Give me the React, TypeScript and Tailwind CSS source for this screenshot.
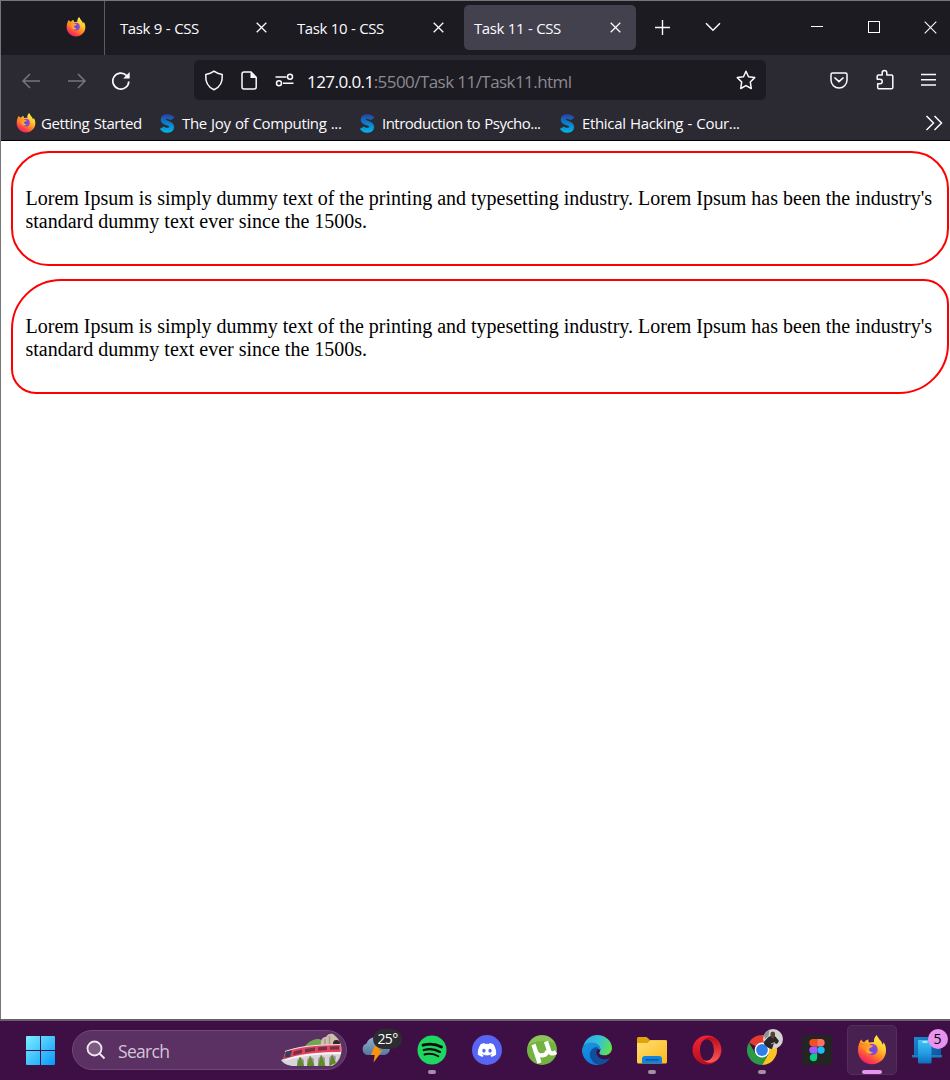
import React from "react";
import { FaDiscord } from "react-icons/fa";

const UI = "font-['Open_Sans','Noto_Sans',sans-serif]";

function FirefoxLogo({ size, id }: { size: number; id: string }) {
  return (
    <svg width={size} height={size} viewBox="0 0 30 30" className="shrink-0">
      <defs>
        <linearGradient id={id + "a"} x1="0.85" y1="0.05" x2="0.3" y2="1">
          <stop offset="0" stopColor="#fff44f" />
          <stop offset="0.35" stopColor="#ffc52e" />
          <stop offset="0.6" stopColor="#ff8425" />
          <stop offset="0.82" stopColor="#ff3f48" />
          <stop offset="1" stopColor="#e91e78" />
        </linearGradient>
        <radialGradient id={id + "b"} cx="0.55" cy="0.6" r="0.6">
          <stop offset="0" stopColor="#5f4df0" />
          <stop offset="1" stopColor="#a545c0" />
        </radialGradient>
        <linearGradient id={id + "c"} x1="0" y1="0" x2="1" y2="0.3">
          <stop offset="0" stopColor="#ff7a1f" />
          <stop offset="1" stopColor="#ffb42a" />
        </linearGradient>
      </defs>
      <path
        d="M2.500 8 C3 6 3.800 5 4.500 4.500 C5 6.500 6 7 7.500 7 C8.500 5.500 10 4.500 11.500 4.500 C11.200 5.500 11.300 6.500 12 7.500 L17 7 C16.500 4 18 1.500 20 0 C20.500 3.500 24.500 5 25.500 9.500 C26.500 9 26.500 7.500 26.500 7 C28.500 10 29 12.500 29 15.500 C29 23.500 22.500 29.300 15 29.300 C7 29.300 1 23 1 15.500 C1 12 1.500 10 2.500 8Z"
        fill={`url(#${id}a)`}
      />
      <circle cx="15" cy="14.500" r="5.700" fill={`url(#${id}b)`} />
      <path
        d="M2.500 8 C5 8.500 7 7.500 9 8 C11 8.300 11 9.500 13 10 L16 10.800 C15.300 12.800 12.500 12.500 12 14 C11.800 16.500 14.500 17.500 16.500 17 C13 20.500 8.500 18.500 8 14.500 C5 14 3 11 2.500 8Z"
        fill={`url(#${id}c)`}
      />
    </svg>
  );
}

function Cross({ size, w = 1.3 }: { size: number; w?: number }) {
  return (
    <svg width={size} height={size} viewBox={`0 0 ${size} ${size}`} className="shrink-0">
      <path d={`M.7 .7 L${size - 0.7} ${size - 0.7} M${size - 0.7} .7 L.7 ${size - 0.7}`} stroke="#fbfbfe" strokeWidth={w} />
    </svg>
  );
}

function Tab({ title, active }: { title: string; active?: boolean }) {
  return (
    <div
      className={
        "flex h-[45px] w-[172px] shrink-0 items-center justify-between rounded-[5px] pl-[10px] pr-[15px] " +
        (active ? "bg-[#42414d]" : "")
      }
    >
      <span className="whitespace-nowrap text-[15px] leading-[20px] tracking-[-0.450px] text-[#fbfbfe] [word-spacing:0.500px]">
        {title}
      </span>
      <Cross size={11} />
    </div>
  );
}

function SwayamMark({ id }: { id: string }) {
  return (
    <svg width="15" height="19" viewBox="0 0 15 19" className="shrink-0">
      <defs>
        <linearGradient id={id} x1="0" y1="0" x2="0" y2="19" gradientUnits="userSpaceOnUse">
          <stop offset="0" stopColor="#2b3f9e" />
          <stop offset="0.45" stopColor="#0b7cc9" />
          <stop offset="1" stopColor="#05b4ea" />
        </linearGradient>
      </defs>
      <path
        d="M12.300 5 C10.500 2 3.200 1.500 3.200 5.700 C3.200 9.600 11.700 8.500 11.700 12.700 C11.700 17.300 4 17.200 2 13.600"
        fill="none"
        stroke={`url(#${id})`}
        strokeWidth="4.900"
      />
    </svg>
  );
}

function TabStrip() {
  return (
    <div className="flex h-[54px] bg-[#1c1b22]">
      <div className="flex w-[104px] shrink-0 items-start justify-end border-r border-[#5b5b60] pr-[18px] pt-[16px]">
        <FirefoxLogo size={20} id="view" />
      </div>
      <div className="flex gap-[5px] pl-[5px] pt-[4px]">
        <Tab title="Task 9 - CSS" />
        <Tab title="Task 10 - CSS" />
        <Tab title="Task 11 - CSS" active />
      </div>
      <svg width="15" height="15" viewBox="0 0 15 15" className="ml-[19px] mt-[19px] shrink-0">
        <path d="M7.500 0V15M0 7.500H15" stroke="#fbfbfe" strokeWidth="1.400" />
      </svg>
      <svg width="16" height="10" viewBox="0 0 16 10" className="ml-[35px] mt-[21px] shrink-0">
        <path d="M1 1.300 L8 8.200 L15 1.300" fill="none" stroke="#fbfbfe" strokeWidth="1.500" />
      </svg>
      <div className="ml-[90px] mt-[25px] h-px w-[12px] shrink-0 bg-white" />
      <div className="ml-[45px] mt-[20px] h-[12px] w-[12px] shrink-0 border border-white" />
      <div className="ml-[44px] mt-[20px] shrink-0">
        <Cross size={13} w={1.1} />
      </div>
    </div>
  );
}

function Arrow({ flip }: { flip?: boolean }) {
  return (
    <svg width="19" height="16" viewBox="0 0 19 16" className={"mt-px shrink-0 " + (flip ? "-scale-x-100" : "")}>
      <path d="M18 8H1.200M8 1L1 8L8 15" fill="none" stroke="#77767d" strokeWidth="1.500" />
    </svg>
  );
}

function AddressBar() {
  return (
    <div className="ml-[63px] flex h-[40px] w-[572px] shrink-0 items-center rounded-[5px] bg-[#1c1b22] pl-[10px] pr-[10px]">
      <svg width="20" height="21" viewBox="0 0 20 21" className="shrink-0">
        <path
          d="M10 1.200 C12.500 3.200 15.200 4 18.200 4.400 C18.700 10.500 17 16.800 10 19.700 C3 16.800 1.300 10.500 1.800 4.400 C4.800 4 7.500 3.200 10 1.200Z"
          fill="none"
          stroke="#fbfbfe"
          strokeWidth="1.500"
          strokeLinejoin="round"
        />
      </svg>
      <svg width="17" height="19" viewBox="0 0 17 19" className="ml-[17px] shrink-0">
        <path d="M3 1 H10 L15.200 6.200 V16 A2 2 0 0 1 13.200 18 H3 A2 2 0 0 1 1 16 V3 A2 2 0 0 1 3 1Z" fill="none" stroke="#fbfbfe" strokeWidth="1.500" />
        <path d="M9.500 1 V7 H15.500Z" fill="#fbfbfe" />
      </svg>
      <svg width="19" height="14" viewBox="0 0 19 14" className="ml-[17px] shrink-0">
        <g fill="none" stroke="#fbfbfe" strokeWidth="1.500">
          <path d="M.5 4H11.500M8 10.300H18.500" />
          <circle cx="15" cy="3.700" r="2.500" />
          <circle cx="4" cy="10.300" r="2.500" />
        </g>
      </svg>
      <span className="ml-[13px] grow whitespace-nowrap pt-[3px] text-[17px] leading-[24px] tracking-[-0.560px] text-[#8b8a90]">
        <span className="text-[#fbfbfe]">127.0.0.1</span>:5500/Task 11/Task11.html
      </span>
      <svg width="20" height="20" viewBox="0 0 20 20" className="shrink-0">
        <path
          d="M10 1.300 L12.500 6.700 L18.700 7.600 L14.300 12 L15.300 18.500 L10 15.600 L4.700 18.500 L5.700 12 L1.300 7.600 L7.500 6.700Z"
          fill="none"
          stroke="#fbfbfe"
          strokeWidth="1.500"
          strokeLinejoin="round"
        />
      </svg>
    </div>
  );
}

function NavBar() {
  return (
    <div className="flex h-[50px] items-center bg-[#2b2a33] pl-[21px]">
      <Arrow />
      <div className="ml-[26px] flex">
        <Arrow flip />
      </div>
      <svg width="20" height="20" viewBox="0 0 20 20" className="ml-[25px] mt-[2px] shrink-0">
        <path d="M17.800 10.500 A8 8 0 1 1 15.600 4.600" fill="none" stroke="#fbfbfe" strokeWidth="1.700" />
        <path d="M18.700 1 V7.500 H12.200Z" fill="#fbfbfe" />
      </svg>
      <AddressBar />
      <svg width="18" height="17" viewBox="0 0 18 17" className="ml-[64px] shrink-0">
        <path d="M2.500 1 H15.500 A1.500 1.500 0 0 1 17 2.500 V8 A8 8 0 0 1 1 8 V2.500 A1.500 1.500 0 0 1 2.500 1Z" fill="none" stroke="#fbfbfe" strokeWidth="1.500" />
        <path d="M5 6 L9 9.700 L13 6" fill="none" stroke="#fbfbfe" strokeWidth="1.700" strokeLinecap="round" />
      </svg>
      <svg width="18" height="21" viewBox="0 0 18 21" className="-mt-px ml-[28px] shrink-0">
        <path
          d="M6.200 6 V3.800 A2.300 2.300 0 0 1 10.800 3.800 V6 H15.500 A1.300 1.300 0 0 1 16.800 7.300 V18.500 A1.300 1.300 0 0 1 15.500 19.800 H3 A1.300 1.300 0 0 1 1.700 18.500 V14.800 H4 A2.200 2.200 0 0 0 4 10.300 H1.200 V7.300 A1.300 1.300 0 0 1 2.500 6Z"
          fill="none"
          stroke="#fbfbfe"
          strokeWidth="1.500"
          strokeLinejoin="round"
        />
      </svg>
      <svg width="15" height="14" viewBox="0 0 15 14" className="ml-[27px] shrink-0">
        <path d="M0 1.500H15M0 6.700H15M0 12H15" stroke="#fbfbfe" strokeWidth="1.400" />
      </svg>
    </div>
  );
}

function Bookmarks() {
  const t = "whitespace-nowrap -mt-px text-[15px] leading-[20px] text-[#fbfbfe] [word-spacing:0.800px] ";
  return (
    <div className="flex h-[36px] items-center border-b border-black bg-[#2b2a33] pl-[15px] pt-px">
      <div className="flex w-[144px] shrink-0 items-center gap-[5px]">
        <FirefoxLogo size={20} id="start" />
        <span className={t + "tracking-[-0.400px]"}>Getting Started</span>
      </div>
      <div className="flex w-[200px] shrink-0 items-center gap-[7px]">
        <SwayamMark id="s1" />
        <span className={t + "tracking-[-0.370px]"}>The Joy of Computing ...</span>
      </div>
      <div className="flex w-[200px] shrink-0 items-center gap-[7px]">
        <SwayamMark id="s2" />
        <span className={t + "tracking-[-0.520px]"}>Introduction to Psycho...</span>
      </div>
      <div className="flex w-[365px] shrink-0 items-center gap-[7px]">
        <SwayamMark id="s3" />
        <span className={t + "tracking-[-0.340px]"}>Ethical Hacking - Cour...</span>
      </div>
      <svg width="18" height="16" viewBox="0 0 18 16" className="shrink-0">
        <path d="M1.500 1L8.500 8L1.500 15M9.500 1L16.500 8L9.500 15" fill="none" stroke="#fbfbfe" strokeWidth="1.500" />
      </svg>
    </div>
  );
}

function Card({ shape }: { shape: string }) {
  return (
    <div className={"h-[115px] w-[938px] border-2 border-[#f00] px-[12.500px] pt-[34px] " + shape}>
      <p className="font-['Liberation_Serif',serif] text-[20px] leading-[23px] text-black">
        Lorem Ipsum is simply dummy text of the printing and typesetting industry. Lorem Ipsum has been the industry's
        standard dummy text ever since the 1500s.
      </p>
    </div>
  );
}

function TrainArt() {
  return (
    <svg width="63" height="34" viewBox="0 0 63 34" className="shrink-0">
      <path d="M24 14 C29 8 34 6 38 6 C41 6 44 8 46 14Z" fill="#6fa653" />
      <path d="M41 14 C40 6 43 4 46 4 C47 1 51 0 53 1 C58 5 61 9 61.500 15 C62 24 58 30 52 33 L41 28Z" fill="#cdbfae" />
      <path d="M45 6 V13 M49.500 3 V12" stroke="#a59686" strokeWidth="1.400" />
      <path d="M53 12 V10 A3.500 3.500 0 0 1 60 11 V14Z" fill="#33272a" />
      <path d="M1 27 L12 22 L61 18 C60 26 55 31 50 33 L12 33 C6 32 3 30 1 27Z" fill="#d9d4da" />
      <path d="M17 33 V28 A4 4 0 0 1 24 27 V33Z M27 33 V27 A4 4 0 0 1 34 26 V33Z M38 33 V26 A4 4 0 0 1 45 25 V33Z M49 32 V25 A4 4 0 0 1 56 24 L55 30Z" fill="#a795a3" />
      <path d="M20 22 L24 33 H17Z M30 22 L34.500 33 H27Z M41 21 L45.500 33 H38Z M52 21 L56 30 L49 33Z" fill="#5e8d26" />
      <path d="M3.500 25 C4 19 7 17 12 16 C30 12.500 46 11.500 60.500 11.500 V19 C46 19 28 20.500 14 24.500 C10 26.500 5 26.500 3.500 25Z" fill="#e8415c" />
      <path d="M5 18.500 C18 13.500 40 11.500 60.500 11.500" stroke="#f1dfe5" strokeWidth="1.200" fill="none" />
      <path d="M6 18.500 L12 17.500 L10 24 L4.500 24.500Z" fill="#31425f" />
      <path d="M14 18.500 L22 16.500 V20 L13 22.300Z M25 16 L35 14.500 V18 L25 19.500Z M38 14.300 L47 13.600 V17 L38 17.800Z M50 13.500 L59 13.200 V16.500 L50 16.800Z" fill="#713149" />
      <path d="M5 27 C20 21.500 40 20 61 20" stroke="#f7f4f7" strokeWidth="1.800" fill="none" />
    </svg>
  );
}

function Weather() {
  return (
    <div className="relative ml-[14px] h-[59px] w-[43.500px] shrink-0">
      <svg width="32" height="30" viewBox="0 0 32 30" className="absolute left-0 top-[12px]">
        <defs>
          <linearGradient id="cl" x1="0" y1="0" x2="0" y2="1">
            <stop offset="0" stopColor="#93b0ca" />
            <stop offset="1" stopColor="#52789e" />
          </linearGradient>
        </defs>
        <path d="M6.500 22 A6 6 0 0 1 5.500 10.500 A9.500 9.500 0 0 1 22 8 A7.200 7.200 0 0 1 24 22Z" fill="url(#cl)" />
        <path d="M13.500 13 H20.500 L18 17.500 H21.500 L12.500 29.500 L13.700 22 H10Z" fill="#f9930f" />
      </svg>
      <div className="absolute left-[12px] top-[8px] flex h-[20px] w-[29px] items-center justify-center rounded-full bg-[#2d2c30] text-[14px] leading-none tracking-[-0.600px] text-white">
        25°
      </div>
    </div>
  );
}

function App30({ children, mark }: { children: React.ReactNode; mark?: boolean }) {
  return (
    <div className="flex h-[59px] w-[55px] shrink-0 flex-col items-center pt-[14px]">
      <div className="h-[30px] w-[30px]">{children}</div>
      {mark && <div className="mt-[5px] h-[4px] w-[8px] shrink-0 rounded-full bg-[#a58fa9]" />}
    </div>
  );
}

function Taskbar() {
  return (
    <div className="flex h-[59px] overflow-hidden bg-[#3d0f45] pl-[26px]">
      <svg width="29" height="29" viewBox="0 0 29 29" className="mt-[15px] shrink-0">
        <defs>
          <linearGradient id="win" x1="0" y1="0" x2="29" y2="29" gradientUnits="userSpaceOnUse">
            <stop offset="0" stopColor="#7cf0ff" />
            <stop offset="1" stopColor="#0797fb" />
          </linearGradient>
        </defs>
        <path d="M1 0H14V14H0V1A1 1 0 0 1 1 0Z M15 0H28A1 1 0 0 1 29 1V14H15Z M0 15H14V29H1A1 1 0 0 1 0 28Z M15 15H29V28A1 1 0 0 1 28 29H15Z" fill="url(#win)" />
      </svg>
      <div className="ml-[17px] mt-[9px] flex h-[40px] w-[275px] shrink-0 items-center rounded-full border border-[#70477a] bg-[#5b3062] pl-[13px] pr-[3px]">
        <svg width="20" height="20" viewBox="0 0 20 20" className="shrink-0">
          <circle cx="8.500" cy="8.500" r="7" fill="#7d5a84" stroke="#eee8ef" strokeWidth="1.800" />
          <path d="M13.500 13.500L18.500 18.500" stroke="#eee8ef" strokeWidth="2" />
        </svg>
        <span className="ml-[12px] grow pt-px text-[17.500px] leading-[24px] tracking-[-0.700px] text-[#d3c5d6]">Search</span>
        <TrainArt />
      </div>
      <Weather />
      <App30 mark>
        <svg width="30" height="30" viewBox="0 0 30 30">
          <circle cx="15" cy="15" r="14.500" fill="#1ed760" />
          <g fill="none" stroke="#0b0b0b" strokeLinecap="round">
            <path d="M6 10.200 C12 8.400 19 9 24.500 12" strokeWidth="2.800" />
            <path d="M6.800 15 C12 13.500 18 14 23 16.900" strokeWidth="2.300" />
            <path d="M7.500 19.500 C12 18.300 17 18.700 21.300 21.200" strokeWidth="1.900" />
          </g>
        </svg>
      </App30>
      <App30>
        <div className="flex h-[30px] w-[30px] items-center justify-center rounded-full bg-[#5865f2]">
          <FaDiscord size={20} color="#fff" />
        </div>
      </App30>
      <App30>
        <svg width="30" height="30" viewBox="0 0 30 30">
          <circle cx="15" cy="15" r="15" fill="#74b341" />
          <path d="M1 10 A15 15 0 0 1 28 8 C18 4 8 6 1 10Z" fill="#8cc45a" />
          <path d="M6.500 9.500 L12.500 28" stroke="#fff" strokeWidth="4.300" fill="none" />
          <path d="M8.500 16 C11 22.500 19.500 21.500 20.500 15.500" stroke="#fff" strokeWidth="4.300" fill="none" />
          <path d="M19 6.500 L22 15.500 C23 18.800 25.500 19.300 29 17" stroke="#fff" strokeWidth="4.300" fill="none" />
        </svg>
      </App30>
      <App30>
        <svg width="30" height="30" viewBox="0 0 30 30">
          <defs>
            <linearGradient id="eg" x1="0" y1="0.300" x2="1" y2="0.600">
              <stop offset="0" stopColor="#2aa9e8" />
              <stop offset="0.500" stopColor="#35c1d7" />
              <stop offset="1" stopColor="#60e34b" />
            </linearGradient>
            <linearGradient id="eb" x1="0.200" y1="0" x2="0.500" y2="1">
              <stop offset="0" stopColor="#1b93dd" />
              <stop offset="1" stopColor="#0a7adb" />
            </linearGradient>
          </defs>
          <path d="M1 12 C3 4 9 0 15 0 C24 0 30 6.500 30 13 C30 17.500 26.500 20.300 22.500 20.300 C19 20.300 16.500 19 17.500 17.500 C20 14 17 8.500 10 8.500 C5 8.500 2 10 1 12Z" fill="url(#eg)" />
          <path d="M0 15 C0 10.500 4.500 7.500 9.500 7.500 C15 7.500 18.800 11 18.800 15 L14 13 L12 27 L18 30 C8 31.500 0 24 0 15Z" fill="url(#eb)" />
          <path d="M14.500 12 C9 13 6.500 18 8.500 23 C10.500 27.500 14 30 18.500 29.700 C23 28.800 26 26.500 28 23 C24 25.300 19 24.500 16.500 22 C14 19.500 13.500 16.500 15.500 14 C16.200 13 15.500 12 14.500 12Z" fill="#104f9e" />
        </svg>
      </App30>
      <App30 mark>
        <svg width="30" height="30" viewBox="0 0 30 30">
          <defs>
            <linearGradient id="fo" x1="0" y1="0" x2="1" y2="1">
              <stop offset="0" stopColor="#ffdf70" />
              <stop offset="1" stopColor="#fbb91f" />
            </linearGradient>
          </defs>
          <path d="M0 3.500 A1.500 1.500 0 0 1 1.500 2 H9.500 L13 5 H28.500 A1.500 1.500 0 0 1 30 6.500 V12 H0Z" fill="#e2a20b" />
          <path d="M0 8 H10.500 L13.500 5.300 H28.500 A1.500 1.500 0 0 1 30 7 V27 A1.500 1.500 0 0 1 28.500 28.500 H1.500 A1.500 1.500 0 0 1 0 27Z" fill="url(#fo)" />
          <path d="M5 28.500 V24 A3 3 0 0 1 8 21 H22 A3 3 0 0 1 25 24 V28.500Z" fill="#1283dc" />
          <path d="M8.500 24.800H21.500" stroke="#084f95" strokeWidth="1.300" />
        </svg>
      </App30>
      <App30>
        <svg width="30" height="30" viewBox="0 0 30 30">
          <defs>
            <linearGradient id="op" x1="0" y1="0" x2="0" y2="1">
              <stop offset="0" stopColor="#f52336" />
              <stop offset="1" stopColor="#b4101c" />
            </linearGradient>
            <linearGradient id="oq" x1="0" y1="0" x2="0" y2="1">
              <stop offset="0" stopColor="#b80d18" />
              <stop offset="1" stopColor="#ff5b58" />
            </linearGradient>
          </defs>
          <path fillRule="evenodd" d="M15 .5A14.500 14.500 0 1 1 15 29.500A14.500 14.500 0 1 1 15 .5Z M15 4C10.500 4 8 9 8 15S10.500 26 15 26S22 21 22 15S19.500 4 15 4Z" fill="url(#op)" />
          <path d="M11 5.200 C17 -1 29 3 29 15 C29 27 17 31 11 24.800 C16.500 28 22 23 22 15 C22 7 16.500 2 11 5.200Z" fill="url(#oq)" />
        </svg>
      </App30>
      <App30 mark>
        <svg width="36" height="36" viewBox="0 -6 36 36" className="-mt-[6px]">
          <path d="M15 15 L2 7.500 A15 15 0 0 1 28 7.500Z" fill="#e33b2e" />
          <path d="M15 15 H15 V7.500 H28 A15 15 0 0 1 15 30 L21.500 18.800Z" fill="#fcc31e" />
          <path d="M2 7.500 A15 15 0 0 0 15 30 L21.500 18.800 L15 15 L8.500 18.800Z" fill="#2a9a48" />
          <circle cx="15" cy="15" r="7.400" fill="#fff" />
          <circle cx="15" cy="15" r="5.900" fill="#2f7de9" />
          <circle cx="26" cy="4" r="10" fill="#d5d2d0" />
          <path d="M16.500 7.500 C19 5 20.500 2 23.500 1 L28.500 1.500 L32 6 L30 9 L27 8 L25 13.900 C21 13.500 17.800 11 16.500 7.500Z" fill="#29272d" />
          <path d="M23.500 1.500 V-2 A2.400 2.400 0 0 1 28 -2 V1.500 L26 4Z" fill="#5a4038" />
          <path d="M17 0 A10 10 0 0 1 22.500 -5.300 L21.500 1 L18 4Z" fill="#8d9094" />
          <path d="M24 9 L28 7.500" stroke="#b88d7c" strokeWidth="1.300" />
        </svg>
      </App30>
      <App30>
        <svg width="30" height="30" viewBox="0 0 30 30">
          <rect width="30" height="30" rx="1" fill="#242424" />
          <path d="M15.200 4 H11 A3.700 3.700 0 0 0 11 11.400 H15.200Z" fill="#f24e1e" />
          <path d="M15.200 4 H19 A3.700 3.700 0 0 1 19 11.400 H15.200Z" fill="#ff7262" />
          <path d="M15.200 11.400 H11 A3.700 3.700 0 0 0 11 18.800 H15.200Z" fill="#a259ff" />
          <circle cx="19" cy="15.100" r="3.700" fill="#1abcfe" />
          <path d="M15.200 18.800 H11 A3.700 3.700 0 1 0 15.200 22.500Z" fill="#0acf83" />
        </svg>
      </App30>
      <div className="flex w-[55px] shrink-0 justify-center pt-[4px]">
        <div className="flex h-[50px] w-[50px] flex-col items-center rounded-[5px] border border-[#532e5b] bg-[#492151] pt-[9px]">
          <FirefoxLogo size={30} id="task" />
          <div className="mt-[5px] h-[4px] w-[20px] shrink-0 rounded-full bg-[#e993f0]" />
        </div>
      </div>
      <div className="relative ml-[12px] h-[59px] w-[40px] shrink-0">
        <svg width="30" height="28" viewBox="0 0 30 28" className="absolute left-0 top-[16px]">
          <defs>
            <linearGradient id="scr" x1="0" y1="0" x2="1" y2="1">
              <stop offset="0" stopColor="#1a8ad0" />
              <stop offset="1" stopColor="#0c5499" />
            </linearGradient>
            <linearGradient id="ph" x1="0" y1="0" x2="0" y2="1">
              <stop offset="0" stopColor="#45c3f5" />
              <stop offset="0.600" stopColor="#2099e0" />
              <stop offset="1" stopColor="#0f6dbd" />
            </linearGradient>
          </defs>
          <path d="M2 0 H29 V19 H2Z" fill="url(#scr)" />
          <path d="M0 18 H30 V19.500 A1 1 0 0 1 29 20.500 H1 A1 1 0 0 1 0 19.500Z" fill="#1b7cc5" />
          <rect x="6" y="3" width="13.500" height="23.500" rx="1" fill="url(#ph)" />
          <path d="M10.500 5H15.500" stroke="#fff" strokeWidth="1.200" />
        </svg>
        <div className="absolute left-[16px] top-[8px] flex h-[20px] w-[20px] items-center justify-center rounded-full bg-[#e993f0] text-[14px] leading-none text-black">
          5
        </div>
      </div>
    </div>
  );
}

export default function App() {
  return (
    <div className={"flex h-[1080px] w-[950px] flex-col overflow-hidden bg-white " + UI}>
      <div className="flex h-[1020px] shrink-0 flex-col overflow-hidden border-l border-t border-[#767676]">
        <TabStrip />
        <NavBar />
        <Bookmarks />
        <main className="flex grow flex-col gap-[13px] bg-white pl-[10px] pt-[10px]">
          <Card shape="rounded-[37.500px]" />
          <Card shape="rounded-tl-[50px] rounded-tr-[25px] rounded-br-[50px] rounded-bl-[25px]" />
        </main>
      </div>
      <div className="-mt-px h-[2px] shrink-0 bg-[#6b5f6e]" />
      <Taskbar />
    </div>
  );
}
